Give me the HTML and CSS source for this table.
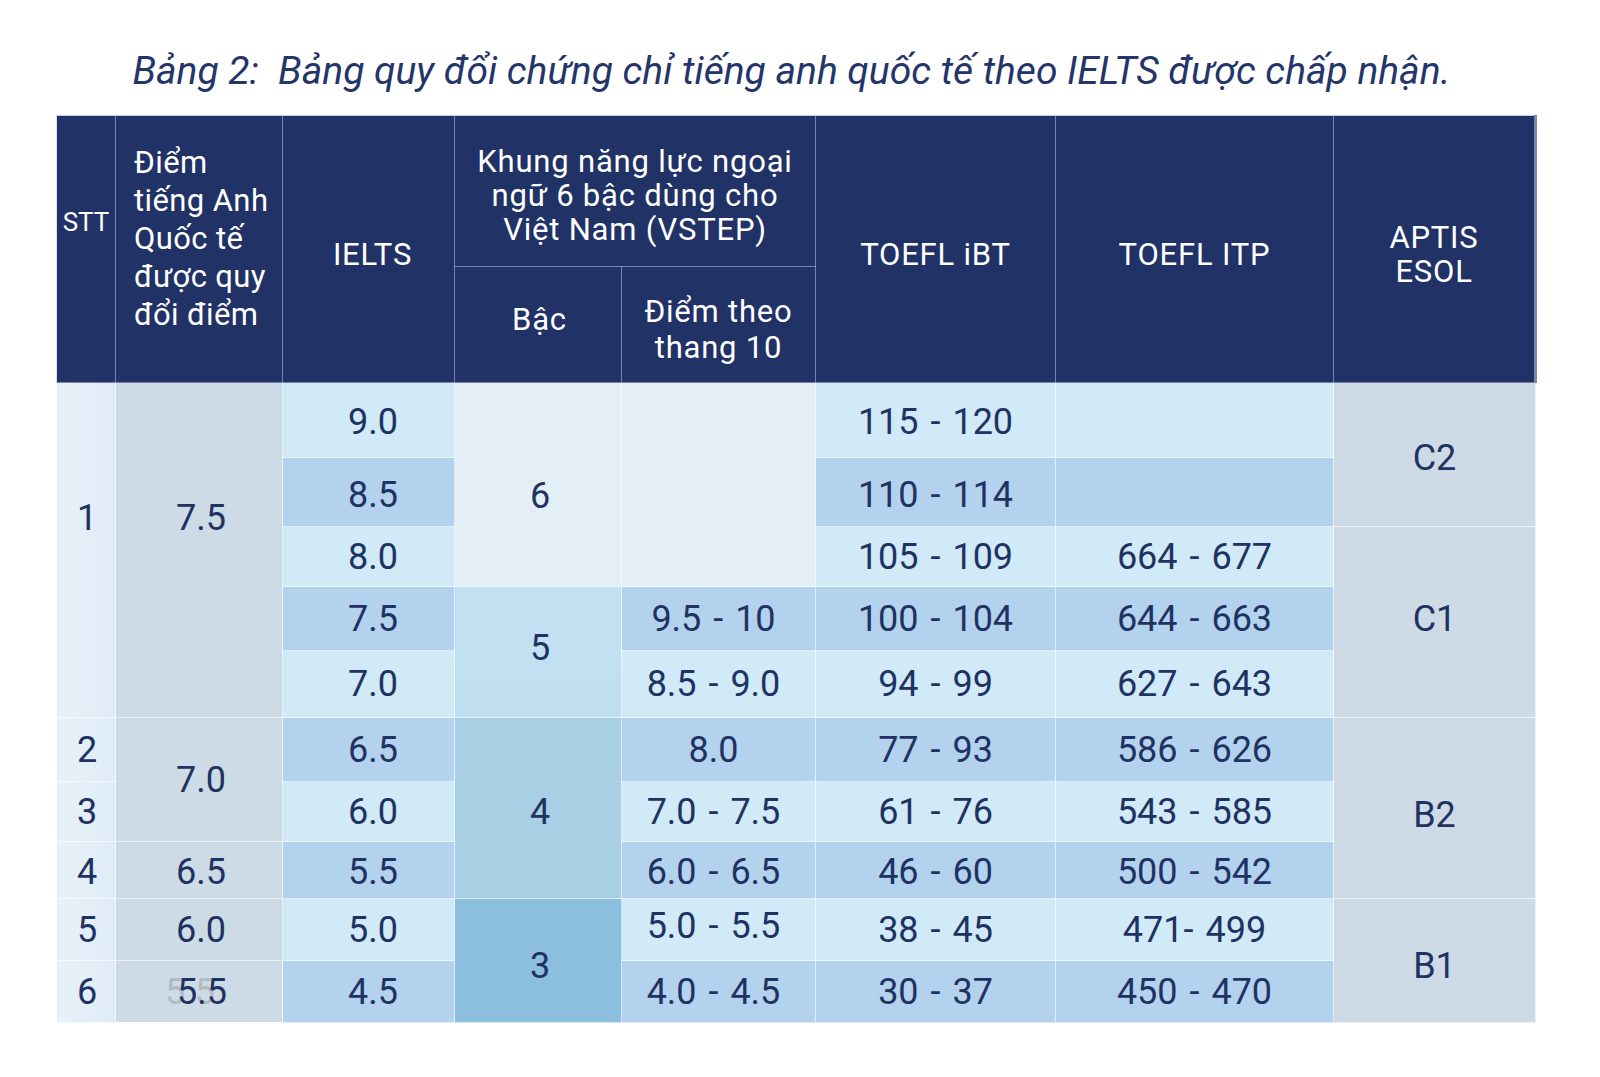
FILE: index.html
```html
<!DOCTYPE html>
<html lang="vi">
<head>
<meta charset="utf-8">
<title>Bảng quy đổi chứng chỉ tiếng anh</title>
<link rel="stylesheet" href="styles.css">
</head>
<body>
<main class="page">
  <h1 class="title">Bảng 2:&nbsp; Bảng quy đổi chứng chỉ tiếng anh quốc tế theo IELTS được chấp nhận.</h1>
  <table class="grid">
    <colgroup>
      <col class="c-stt"><col class="c-diem"><col class="c-ielts"><col class="c-bac"><col class="c-thang"><col class="c-ibt"><col class="c-itp"><col class="c-aptis">
    </colgroup>
    <thead>
      <tr class="h1">
        <th rowspan="2" class="th-stt">STT</th>
        <th rowspan="2" class="th-diem">Điểm<br>tiếng Anh<br>Quốc tế<br>được quy<br>đổi điểm</th>
        <th rowspan="2" class="th-one col-ielts">IELTS</th>
        <th colspan="2" class="th-vstep">Khung năng lực ngoại<br>ngữ 6 bậc dùng cho<br>Việt Nam (VSTEP)</th>
        <th rowspan="2" class="th-one">TOEFL iBT</th>
        <th rowspan="2" class="th-one">TOEFL ITP</th>
        <th rowspan="2" class="th-aptis">APTIS<br>ESOL</th>
      </tr>
      <tr class="h2">
        <th class="th-bac">Bậc</th>
        <th class="th-thang">Điểm theo<br>thang 10</th>
      </tr>
    </thead>
    <tbody>
      <tr class="r1">
        <td rowspan="5" class="stt span-top">1</td>
        <td rowspan="5" class="diem span-top">7.5</td>
        <td class="lt col-ielts">9.0</td>
        <td rowspan="3" class="pale bac6 col-bac">6</td>
        <td rowspan="3" class="pale"></td>
        <td class="lt">115 - 120</td>
        <td class="lt"></td>
        <td rowspan="2" class="aptis c2">C2</td>
      </tr>
      <tr class="r2">
        <td class="dk col-ielts">8.5</td>
        <td class="dk">110 - 114</td>
        <td class="dk"></td>
      </tr>
      <tr class="r3">
        <td class="lt col-ielts">8.0</td>
        <td class="lt">105 - 109</td>
        <td class="lt">664 - 677</td>
        <td rowspan="3" class="aptis c1">C1</td>
      </tr>
      <tr class="r4">
        <td class="dk col-ielts">7.5</td>
        <td rowspan="2" class="bac5 col-bac">5</td>
        <td class="dk col-thang">9.5 - 10</td>
        <td class="dk">100 - 104</td>
        <td class="dk">644 - 663</td>
      </tr>
      <tr class="r5">
        <td class="lt col-ielts">7.0</td>
        <td class="lt col-thang">8.5 - 9.0</td>
        <td class="lt">94 - 99</td>
        <td class="lt">627 - 643</td>
      </tr>
      <tr class="r6">
        <td class="stt">2</td>
        <td rowspan="2" class="diem">7.0</td>
        <td class="dk col-ielts">6.5</td>
        <td rowspan="3" class="bac4 col-bac">4</td>
        <td class="dk col-thang">8.0</td>
        <td class="dk">77 - 93</td>
        <td class="dk">586 - 626</td>
        <td rowspan="3" class="aptis b2">B2</td>
      </tr>
      <tr class="r7">
        <td class="stt">3</td>
        <td class="lt col-ielts">6.0</td>
        <td class="lt col-thang">7.0 - 7.5</td>
        <td class="lt">61 - 76</td>
        <td class="lt">543 - 585</td>
      </tr>
      <tr class="r8">
        <td class="stt">4</td>
        <td class="diem">6.5</td>
        <td class="dk col-ielts">5.5</td>
        <td class="dk col-thang">6.0 - 6.5</td>
        <td class="dk">46 - 60</td>
        <td class="dk">500 - 542</td>
      </tr>
      <tr class="r9">
        <td class="stt">5</td>
        <td class="diem">6.0</td>
        <td class="lt col-ielts">5.0</td>
        <td rowspan="2" class="bac3 col-bac">3</td>
        <td class="lt col-thang up">5.0 - 5.5</td>
        <td class="lt">38 - 45</td>
        <td class="lt">471- 499</td>
        <td rowspan="2" class="aptis b1">B1</td>
      </tr>
      <tr class="r10">
        <td class="stt">6</td>
        <td class="diem ghosted"><span class="ghost">5.5</span><span class="real">5.5</span></td>
        <td class="dk col-ielts">4.5</td>
        <td class="dk col-thang">4.0 - 4.5</td>
        <td class="dk">30 - 37</td>
        <td class="dk">450 - 470</td>
      </tr>
    </tbody>
  </table>
</main>
</body>
</html>
```
FILE: styles.css
```css
html, body {
  margin: 0;
  padding: 0;
  background: #ffffff;
}

body {
  font-family: Roboto, "Noto Sans", "Liberation Sans", sans-serif;
  color: #1f3262;
}

.page {
  padding-left: 56px;
  padding-top: 47px;
  width: 1479px;
}

.title {
  margin: 0 0 20px 0;
  height: 48px;
  line-height: 48px;
  font-size: 39px;
  font-weight: 400;
  font-style: italic;
  color: #24356a;
  text-align: center;
  white-space: nowrap;
  padding-right: 8px;
}

.grid {
  width: 1479px;
  table-layout: fixed;
  border-collapse: collapse;
  border-spacing: 0;
}

.c-stt { width: 59px; }
.c-diem { width: 167px; }
.c-ielts { width: 172px; }
.c-bac { width: 167px; }
.c-thang { width: 194px; }
.c-ibt { width: 240px; }
.c-itp { width: 278px; }
.c-aptis { width: 202px; }

/* header */
.grid th {
  background: #203266;
  color: #ffffff;
  font-weight: 400;
  font-size: 31px;
  letter-spacing: 0.8px;
  line-height: 34px;
  text-align: center;
  vertical-align: middle;
  padding: 0;
  border: 1px solid rgba(190, 200, 230, 0.55);
  border-top: 1px solid #c9cfdc;
}

.grid .h1 { height: 151px; }
.grid .h2 { height: 116px; }

.grid .th-stt {
  font-size: 26px;
  letter-spacing: 0;
  padding-bottom: 54px;
}

.grid .th-diem {
  text-align: left;
  padding-left: 18px;
  line-height: 38px;
  padding-bottom: 20px;
  letter-spacing: 0.4px;
}

.grid .th-one { padding-top: 11px; }
.grid .th-aptis { padding-top: 11px; border-right: 3px solid #7d86a8; }
.grid .th-vstep { padding-top: 9px; }
.grid .th-bac { padding-bottom: 10px; padding-left: 3px; }
.grid .th-thang { line-height: 36px; padding-top: 10px; }
.grid th.col-ielts { padding-left: 8px; }

/* body */
.grid td {
  font-size: 36px;
  line-height: 40px;
  word-spacing: 3px;
  text-align: center;
  vertical-align: middle;
  padding: 0;
  color: #1f3262;
  border: 1px solid rgba(255, 255, 255, 0.6);
}

.r1 { height: 75px; }
.r2 { height: 69px; }
.r3 { height: 60px; }
.r4 { height: 64px; }
.r5 { height: 67px; }
.r6 { height: 64px; }
.r7 { height: 60px; }
.r8 { height: 57px; }
.r9 { height: 62px; }
.r10 { height: 62px; }

.r1 td { padding-top: 3px; }
.r2 td { padding-top: 6px; }
.r8 td { padding-top: 4px; }

.grid td.lt { background: #d0eaf8; }
.grid td.dk { background: #b3d2ee; }
.grid td.stt { background: linear-gradient(90deg, #e8f1f9, #dfebf6); padding-left: 2px; }
.grid td.diem { background: #cddbe6; padding-left: 4px; }
.grid td.aptis { background: #cedbe6; }
.grid td.pale { background: #e4eef6; }
.grid td.bac5 { background: linear-gradient(180deg, #c3e0f2, #bfdff0); padding-bottom: 8px; }
.grid td.bac4 { background: #a9cfe5; padding-top: 8px; }
.grid td.bac3 { background: #8cbedd; padding-top: 10px; }

.grid td.col-ielts { padding-left: 9px; }
.grid td.col-bac { padding-left: 4px; }
.grid td.col-thang { padding-right: 10px; }

.grid td.span-top { padding-top: 0; padding-bottom: 64px; }
.grid td.bac6 { padding-top: 22px; }
.grid td.c2 { padding-top: 6px; }
.grid td.c1 { padding-bottom: 6px; padding-top: 0; }
.grid td.b2 { padding-top: 14px; }
.grid td.b1 { padding-top: 10px; }

.grid td.up { padding-bottom: 8px; }

.grid td.ghosted { position: relative; }
.ghost {
  position: absolute;
  left: 49px;
  top: 50%;
  transform: translateY(-50%);
  color: #b3bac2;
}
.real {
  position: relative;
  left: 1px;
}
```
